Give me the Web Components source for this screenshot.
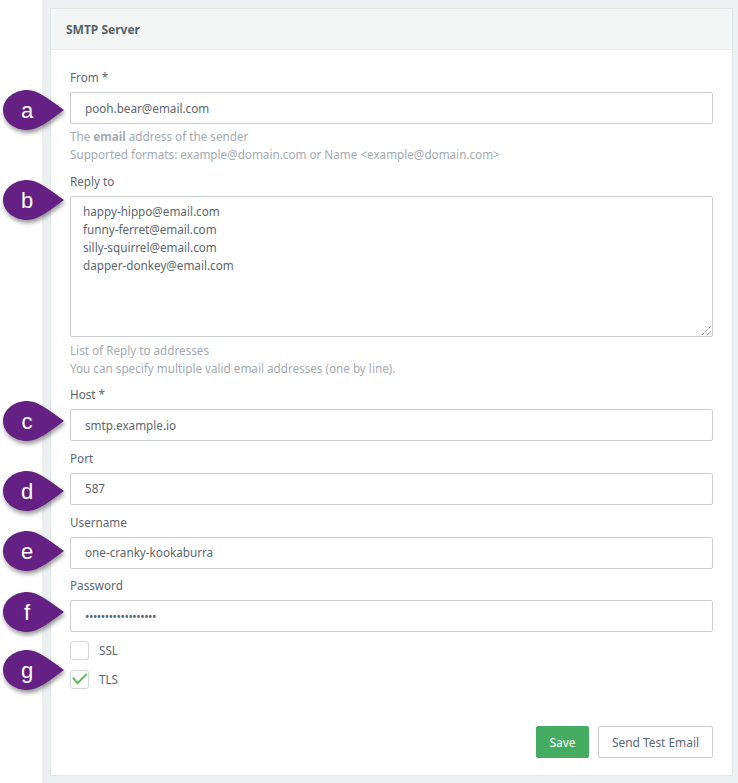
<!DOCTYPE html>
<html>
<head>
<meta charset="utf-8">
<title>SMTP Server</title>
<style>
  html, body { margin: 0; background: #fff; }
  body { font-family: "Noto Sans", sans-serif; width: 738px; height: 783px; overflow: hidden; }
</style>
</head>
<body>
<smtp-page>
  <smtp-panel heading="SMTP Server">
    <smtp-field label="From *" value="pooh.bear@email.com">
      The <b>email</b> address of the sender<br>Supported formats: example@domain.com or Name &lt;example@domain.com&gt;
    </smtp-field>
    <smtp-area label="Reply to" value="happy-hippo@email.com
funny-ferret@email.com
silly-squirrel@email.com
dapper-donkey@email.com">
      List of Reply to addresses<br>You can specify multiple valid email addresses (one by line).
    </smtp-area>
    <smtp-field label="Host *" value="smtp.example.io"></smtp-field>
    <smtp-field label="Port" value="587"></smtp-field>
    <smtp-field label="Username" value="one-cranky-kookaburra"></smtp-field>
    <smtp-field label="Password" value="••••••••••••••••••" secret></smtp-field>
    <smtp-check label="SSL" style="margin-top:-0.67px"></smtp-check>
    <smtp-check label="TLS" checked></smtp-check>
    <smtp-actions slot="actions"></smtp-actions>
  </smtp-panel>
  <smtp-pin letter="a" style="top:90px"></smtp-pin>
  <smtp-pin letter="b" style="top:180px"></smtp-pin>
  <smtp-pin letter="c" style="top:401px"></smtp-pin>
  <smtp-pin letter="d" style="top:471px"></smtp-pin>
  <smtp-pin letter="e" style="top:531px"></smtp-pin>
  <smtp-pin letter="f" style="top:592px"></smtp-pin>
  <smtp-pin letter="g" style="top:650px"></smtp-pin>
</smtp-page>
<script>
const labelCss = `
  .label { font-size: 11.7px; line-height: 14px; color: #5b6770; }
  .help { font-size: 11.7px; line-height: 18px; color: #a3abb1; margin-top: 3.33px; margin-bottom: 1px; }
  .help b { font-weight: 700; }
`;

class SmtpPage extends HTMLElement {
  constructor() {
    super();
    this.attachShadow({ mode: 'open' }).innerHTML = `
      <style>
        :host { display: block; position: relative; width: 696px; height: 783px; box-sizing: border-box;
          margin-left: 42px; padding: 8px 5px 7px 8px; background: #edf0f1; }
      </style>
      <slot></slot>`;
  }
}

class SmtpPanel extends HTMLElement {
  constructor() {
    super();
    this.attachShadow({ mode: 'open' }).innerHTML = `
      <style>
        :host { height: 100%; box-sizing: border-box; background: #fff;
          border: 1px solid #e1e6e8; display: flex; flex-direction: column; }
        header { height: 41px; box-sizing: border-box; background: #f4f6f6; border-bottom: 1px solid #e9edee;
          padding: 0 15px; display: flex; align-items: center; font-size: 12px; font-weight: 700; color: #56616a; }
        .body { flex: 1; padding: 20px 19px 17px 19px; display: flex; flex-direction: column; }
      </style>
      <header></header>
      <div class="body"><slot></slot><slot name="actions"></slot></div>`;
    this.shadowRoot.querySelector('header').textContent = this.getAttribute('heading');
  }
}

class SmtpField extends HTMLElement {
  constructor() {
    super();
    this.attachShadow({ mode: 'open' }).innerHTML = `
      <style>
        :host { display: block; margin-bottom: 9.67px; }
        ${labelCss}
        .input { height: 32px; box-sizing: border-box; margin-top: 8px; border: 1px solid #cbcfd1; border-radius: 2px;
          padding: 0 14px 1px; display: flex; align-items: center; font-size: 11.7px; color: #5b6770; background: #fff; }
        :host([secret]) .input { letter-spacing: -0.45px; }
      </style>
      <div class="label"></div>
      <div class="input"></div>
      <div class="help"><slot></slot></div>`;
    this.shadowRoot.querySelector('.label').textContent = this.getAttribute('label');
    this.shadowRoot.querySelector('.input').textContent = this.getAttribute('value');
    if (!this.textContent.trim()) this.shadowRoot.querySelector('.help').style.display = 'none';
  }
}

class SmtpArea extends HTMLElement {
  constructor() {
    super();
    this.attachShadow({ mode: 'open' }).innerHTML = `
      <style>
        :host { display: block; margin-bottom: 9.67px; }
        ${labelCss}
        .wrap { position: relative; margin-top: 8px; }
        .area { height: 141.33px; box-sizing: border-box; border: 1px solid #cbcfd1; border-radius: 2px;
          padding: 5.5px 12px; font-size: 11.7px; line-height: 18px; color: #5b6770; white-space: pre-line; }
        svg { position: absolute; right: 1px; bottom: 1px; }
      </style>
      <div class="label"></div>
      <div class="wrap"><div class="area"></div>
        <svg width="11" height="11" viewBox="0 0 11 11"><path d="M1 10 10 1M6 10 10 6" stroke="#555" stroke-width="1" stroke-dasharray="1 1" fill="none"/></svg>
      </div>
      <div class="help"><slot></slot></div>`;
    this.shadowRoot.querySelector('.label').textContent = this.getAttribute('label');
    this.shadowRoot.querySelector('.area').textContent = this.getAttribute('value');
  }
}

class SmtpCheck extends HTMLElement {
  constructor() {
    super();
    this.attachShadow({ mode: 'open' }).innerHTML = `
      <style>
        :host { display: flex; align-items: center; gap: 10px; height: 19px; margin-bottom: 10px; font-size: 11.7px; color: #5b6770; }
        .box { width: 19px; height: 19px; box-sizing: border-box; border: 1px solid #d3d6d8; border-radius: 3px; }
        span { padding-bottom: 2px; }
        svg { display: block; }
      </style>
      <div class="box"></div><span></span>`;
    this.shadowRoot.querySelector('span').textContent = this.getAttribute('label');
    if (this.hasAttribute('checked')) {
      this.shadowRoot.querySelector('.box').innerHTML =
        '<svg width="17" height="17" viewBox="0 0 17 17"><path d="M2 6.6 6.4 12.2 15.8 2.8" fill="none" stroke="#5cb85c" stroke-width="1.9"/></svg>';
    }
  }
}

class SmtpActions extends HTMLElement {
  constructor() {
    super();
    this.attachShadow({ mode: 'open' }).innerHTML = `
      <style>
        :host { display: flex; justify-content: flex-end; gap: 9px; margin-top: auto; }
        button { height: 32px; box-sizing: border-box; border-radius: 2px; font: 11.9px "Noto Sans", sans-serif; padding: 0; }
        .save { width: 53px; background: #43ac61; border: 1px solid #43ac61; color: #fff; }
        .test { width: 115px; background: #fff; border: 1px solid #cbcfd1; color: #5b6770; }
      </style>
      <button class="save">Save</button><button class="test">Send Test Email</button>`;
  }
}

class SmtpPin extends HTMLElement {
  constructor() {
    super();
    this.attachShadow({ mode: 'open' }).innerHTML = `
      <style>
        :host { position: absolute; left: -39px; width: 62px; height: 40px; display: block; }
        svg { position: absolute; inset: 0; overflow: visible; filter: drop-shadow(1px 3px 2px rgba(0,0,0,.4)); }
        span { position: absolute; left: 0; width: 48px; top: 0; text-align: center;
          font: 22px/42px "Liberation Sans", Arial, sans-serif; color: #fff; }
      </style>
      <svg width="62" height="40" viewBox="0 0 62 40"><path d="M24 0C36 0 48 11 61 20 48 29 36 40 24 40 11 40 0 31 0 20S11 0 24 0Z" fill="#642183"/></svg>
      <span></span>`;
    this.shadowRoot.querySelector('span').textContent = this.getAttribute('letter');
  }
}

customElements.define('smtp-page', SmtpPage);
customElements.define('smtp-panel', SmtpPanel);
customElements.define('smtp-field', SmtpField);
customElements.define('smtp-area', SmtpArea);
customElements.define('smtp-check', SmtpCheck);
customElements.define('smtp-actions', SmtpActions);
customElements.define('smtp-pin', SmtpPin);
</script>
</body>
</html>
